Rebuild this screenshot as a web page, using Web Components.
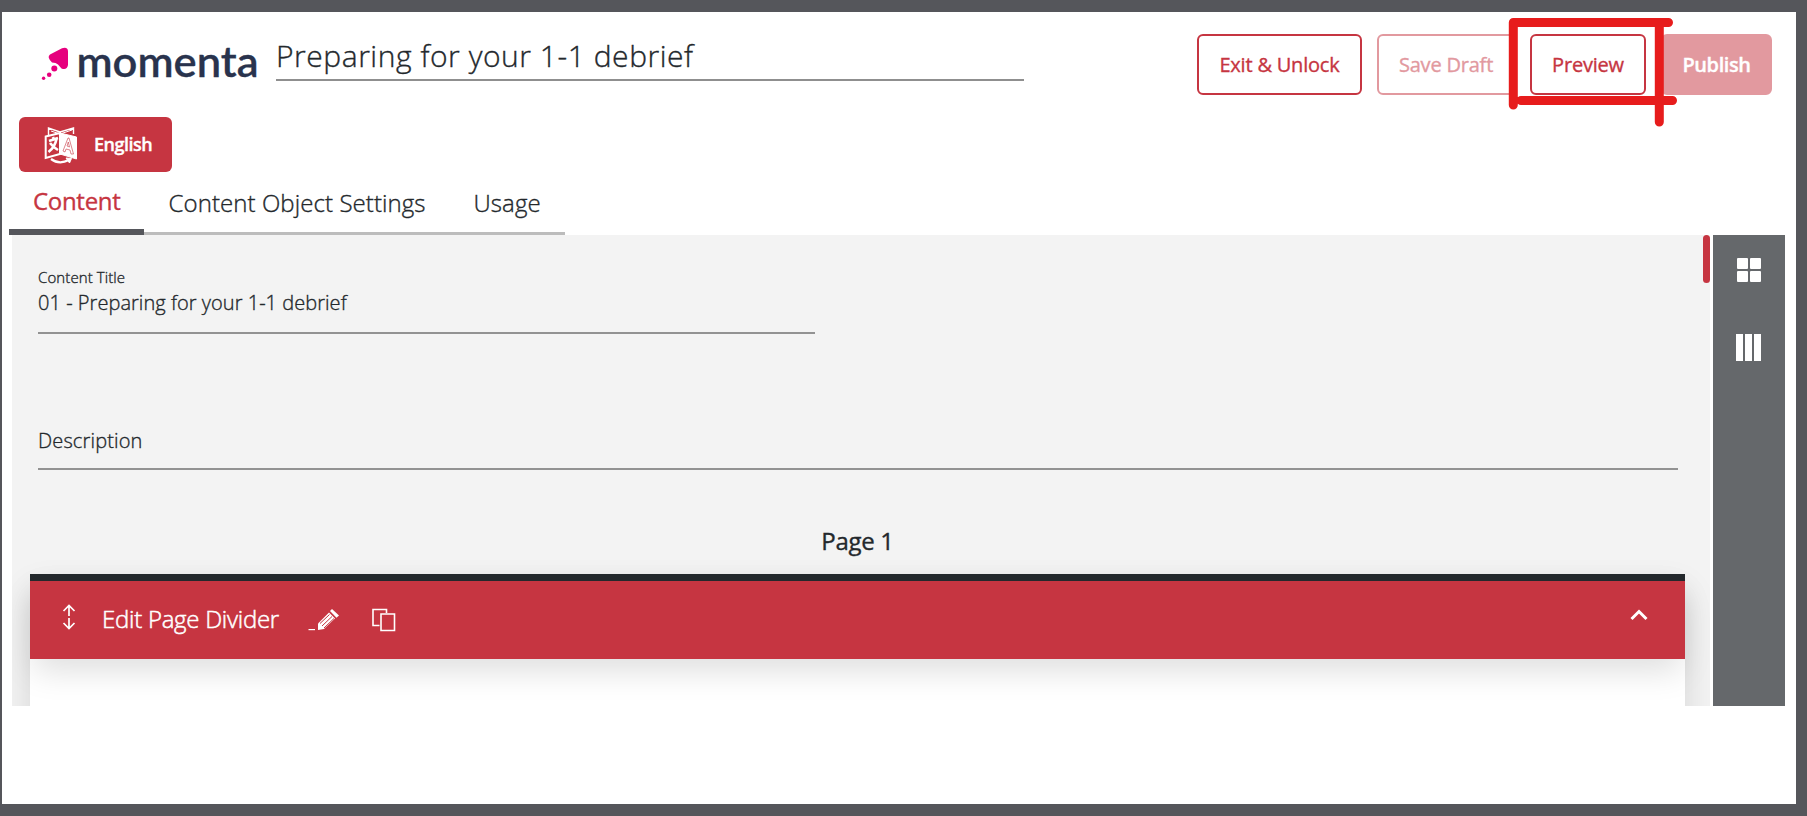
<!DOCTYPE html>
<html lang="en">
<head>
<meta charset="utf-8">
<title>Momenta</title>
<style>
  body {
    margin: 0;
    background: #55565b;
    font-family: "Open Sans", "Noto Sans", sans-serif;
    font-weight: 300;
    -webkit-text-stroke-width: .35px;
    color: #23282c;
  }
</style>
</head>
<body>
<app-window>
  <app-header slot="header" value="Preparing for your 1-1 debrief">
    <app-button style="width:165px">Exit &amp; Unlock</app-button>
    <app-button style="width:138px" disabled>Save Draft</app-button>
    <app-button style="width:116px">Preview</app-button>
    <app-button style="width:111px" filled disabled>Publish</app-button>
  </app-header>
  <language-button slot="language">English</language-button>
  <tab-bar slot="tabs">
    <tab-item style="width:135px" active>Content</tab-item>
    <tab-item style="width:305px">Content Object Settings</tab-item>
    <tab-item style="width:116px">Usage</tab-item>
  </tab-bar>
  <content-panel>
    <text-field style="width:777px" label="Content Title">01 - Preparing for your 1-1 debrief</text-field>
    <text-field class="description" compact>Description</text-field>
    <page-section heading="Page 1">Edit Page Divider</page-section>
  </content-panel>
  <side-tools></side-tools>
</app-window>
<red-marker></red-marker>

<script>
class BaseElement extends HTMLElement {
  constructor() {
    super();
    this.attachShadow({ mode: 'open' });
  }

  connectedCallback() {
    this.shadowRoot.innerHTML = this.render();
  }
}

class AppWindow extends BaseElement {
  render() {
    return `
      <style>
        :host {
          display: flex;
          flex-direction: column;
          width: 1794px;
          height: 792px;
          margin: 12px 11px 12px 2px;
          background: #fff;
        }
        .language { padding-left: 17px; height: 55px; }
        .tabs { padding-left: 7px; height: 63px; }
        .body { display: flex; gap: 3px; height: 471px; padding-left: 10px; }
      </style>
      <slot name="header"></slot>
      <div class="language"><slot name="language"></slot></div>
      <div class="tabs"><slot name="tabs"></slot></div>
      <div class="body"><slot></slot></div>
    `;
  }
}

class AppHeader extends BaseElement {
  render() {
    return `
      <style>
        :host {
          display: flex;
          align-items: flex-start;
          height: 105px;
          box-sizing: border-box;
          padding: 22px 24px 0 34px;
        }
        .logo { flex: none; width: 240px; height: 60px; }
        .title {
          width: 748px;
          height: 45px;
          line-height: 43px;
          font-size: 30px;
          letter-spacing: .54px;
          border-bottom: 2px solid #8f8f8f;
          white-space: nowrap;
        }
        .actions { display: flex; gap: 15px; margin-left: auto; }
      </style>
      <svg class="logo" viewBox="36 34 240 60">
        <path d="M50 54.500 62 48.200Q68 46.500 68 51.500V65Q67 70.500 61.500 68.500L58 64.500Q56 62.500 52 62.500Q46.500 57 50 54.500Z" fill="#e6007e"/>
        <circle cx="54.300" cy="68.500" r="3" fill="#e6007e"/>
        <circle cx="49.200" cy="74.700" r="2.300" fill="#e6007e"/>
        <circle cx="43.600" cy="78.300" r="1.700" fill="#e6007e"/>
        <text x="76.500" y="77.300" font-family="Lato" font-weight="600" font-size="43" textLength="182" lengthAdjust="spacingAndGlyphs" fill="#29334d" stroke="#29334d" stroke-width=".3">momenta</text>
      </svg>
      <div class="title">${this.getAttribute('value')}</div>
      <div class="actions"><slot></slot></div>
    `;
  }
}

class AppButton extends BaseElement {
  render() {
    return `
      <style>
        :host {
          display: flex;
          align-items: center;
          justify-content: center;
          box-sizing: border-box;
          height: 61px;
          border: 2px solid #c63541;
          border-radius: 6px;
          color: #c63541;
          background: #fff;
          font-size: 20px;
          font-weight: 500;
          letter-spacing: -.2px;
          white-space: nowrap;
        }
        :host([disabled]) { border-color: #e2999f; color: #e2999f; }
        :host([filled]) { background: #e2999f; color: #fff; font-weight: 600; letter-spacing: -.4px; }
      </style>
      <slot></slot>
    `;
  }
}

class LanguageButton extends BaseElement {
  render() {
    return `
      <style>
        :host {
          display: flex;
          align-items: center;
          box-sizing: border-box;
          width: 153px;
          height: 55px;
          padding-left: 25px;
          gap: 16px;
          border-radius: 6px;
          background: #c63541;
          color: #fff;
          font-size: 18px;
          font-weight: 600;
          letter-spacing: -.5px;
        }
        svg { width: 34px; height: 38px; margin-top: 3px; }
        span { margin-top: -1px; }
      </style>
      <svg viewBox="0 0 34 38" fill="none" stroke="#fff">
        <path d="M4.500 8V1L16 5 29.500 1V7" stroke-width="1.400"/>
        <path d="M7 4 16 7 28 3" stroke-width="1"/>
        <path d="M1.700 9.500 16 6V27L1.700 31Z" stroke-width="2"/>
        <path d="M16 6 32.500 10V32L16 27Z" fill="#fff"/>
        <path d="M5 14 14 11M9 10 10 13M12.500 12Q11 20 4.500 25M6 16Q9 20 14 23" stroke-width="2.600"/>
        <path d="M19 24 24 11H25L29.500 27H27L26 23 22 22 21 25ZM23 19 25.500 20 24.300 15Z" stroke="#c63541" stroke-width=".6"/>
        <path d="M7 32Q15 38 25 33" stroke-width="2.200"/>
        <path d="M22 31 27.500 31.500 25.500 36Z" fill="#fff"/>
      </svg>
      <span><slot></slot></span>
    `;
  }
}

class TabBar extends BaseElement {
  render() {
    return `
      <style>
        :host { display: flex; height: 63px; }
      </style>
      <slot></slot>
    `;
  }
}

class TabItem extends BaseElement {
  render() {
    return `
      <style>
        :host {
          display: block;
          box-sizing: border-box;
          height: 63px;
          padding: 13px 0 0 24.5px;
          border-bottom: 3px solid #bcbcbc;
          font-size: 24px;
          line-height: 36px;
          letter-spacing: .08px;
          white-space: nowrap;
        }
        :host([active]) {
          padding-top: 11px;
          padding-left: 24px;
          border-bottom: 6px solid #55565b;
          color: #c63541;
          font-weight: 500;
          letter-spacing: -.3px;
        }
      </style>
      <slot></slot>
    `;
  }
}

class ContentPanel extends BaseElement {
  render() {
    return `
      <style>
        :host {
          display: flex;
          flex-direction: column;
          position: relative;
          box-sizing: border-box;
          width: 1698px;
          height: 471px;
          padding: 32px 0 0 26px;
          overflow: hidden;
          background: #f3f3f3;
        }
        ::slotted(.description) { width: 1640px; margin-top: 92px; }
        .thumb {
          position: absolute;
          top: 0;
          right: 0;
          width: 7px;
          height: 48px;
          border-radius: 4px;
          background: #c63541;
        }
      </style>
      <slot></slot>
      <div class="thumb"></div>
    `;
  }
}

class TextField extends BaseElement {
  render() {
    const label = this.getAttribute('label');
    return `
      <style>
        :host {
          display: block;
          border-bottom: 2px solid #929292;
          padding-bottom: 14px;
          white-space: nowrap;
        }
        :host([compact]) { padding-bottom: 12px; }
        .label { font-size: 15px; line-height: 20px; margin-bottom: 1px; letter-spacing: .1px; }
        .value { font-size: 20px; line-height: 30px; letter-spacing: .04px; }
        :host([compact]) .value { letter-spacing: .15px; }
      </style>
      ${label ? `<div class="label">${label}</div>` : ''}
      <div class="value"><slot></slot></div>
    `;
  }
}

class PageSection extends BaseElement {
  render() {
    return `
      <style>
        :host { display: block; width: 1655px; margin: 53px 0 0 -8px; }
        .heading {
          height: 51px;
          line-height: 36px;
          font-size: 24px;
          font-weight: 500;
          letter-spacing: -.3px;
          text-align: center;
        }
        .card {
          height: 260px;
          background: #fff;
          box-shadow: 0 16px 32px rgba(0, 0, 0, .12);
        }
        .bar {
          display: flex;
          align-items: center;
          box-sizing: border-box;
          height: 85px;
          padding: 0 37px 0 32px;
          border-top: 7px solid #23282c;
          background: #c63541;
          color: #fff;
          font-size: 24px;
          letter-spacing: -.27px;
          box-shadow: 0 16px 32px -4px rgba(0, 0, 0, .13);
        }
        svg { flex: none; fill: none; stroke: #fff; }
        .move { width: 14px; height: 26px; margin: -6px 26px 0 0; }
        .name { width: 206px; white-space: nowrap; line-height: 34px; margin-top: -2px; -webkit-text-stroke-width: .5px; }
        .edit { width: 32px; height: 24px; }
        .copy { width: 24px; height: 24px; margin-left: 32px; }
        .chevron { width: 18px; height: 12px; margin: -10px 0 0 auto; }
      </style>
      <div class="heading">${this.getAttribute('heading')}</div>
      <div class="card">
        <div class="bar">
          <svg class="move" viewBox="0 0 14 26" stroke-width="1.700">
            <path d="M7 1.500V12M1.500 7 7 1.500 12.500 7M7 14V24.500M1.500 19 7 24.500 12.500 19"/>
          </svg>
          <span class="name"><slot></slot></span>
          <svg class="edit" viewBox="0 0 32 24">
            <path d="M.5 21.600H7" stroke-width="1.200"/>
            <path d="M10 22V15.500L21 4.500 27 10.500 16 21Z" fill="#fff" stroke="none"/>
            <path d="M22 3 24 1 31 7.500 28.500 9.800Z" fill="#fff" stroke="none"/>
            <path d="M12 15.500 21.500 6.500M14 18 24 8.500M16 20 26 10.500" stroke="#c63541" stroke-width="1"/>
          </svg>
          <svg class="copy" viewBox="0 0 24 24" stroke-width="1.600">
            <path d="M7.500 17.500H1V1.500H14.500V5"/>
            <path d="M9 6H22.500V22.500H9Z"/>
          </svg>
          <svg class="chevron" viewBox="0 0 18 12" stroke-width="3">
            <path d="M1.500 10 9 2.500 16.500 10"/>
          </svg>
        </div>
      </div>
    `;
  }
}

class SideTools extends BaseElement {
  render() {
    return `
      <style>
        :host {
          display: flex;
          flex-direction: column;
          align-items: center;
          box-sizing: border-box;
          width: 72px;
          height: 471px;
          padding-top: 23px;
          background: #65686b;
        }
        svg { fill: #fff; }
        .columns { margin-top: 52px; margin-right: 1px; }
      </style>
      <svg width="24" height="24" viewBox="0 0 24 24">
        <rect x="0" y="0" width="11" height="11" rx="1"/>
        <rect x="13" y="0" width="11" height="11" rx="1"/>
        <rect x="0" y="13" width="11" height="11" rx="1"/>
        <rect x="13" y="13" width="11" height="11" rx="1"/>
      </svg>
      <svg class="columns" width="25" height="27" viewBox="0 0 25 27">
        <rect x="0" width="7" height="27"/>
        <rect x="9" width="7" height="27"/>
        <rect x="18" width="7" height="27"/>
      </svg>
    `;
  }
}

// hand-drawn box that lies over the Preview button
class RedMarker extends BaseElement {
  render() {
    return `
      <style>
        :host { display: block; position: absolute; left: 1500px; top: 10px; }
        svg { display: block; fill: none; stroke: #e71c1c; stroke-width: 9; stroke-linecap: round; }
      </style>
      <svg width="190" height="124" viewBox="1500 10 190 124">
        <path d="M1513.300 22.500V105M1513.300 22.500H1668.500M1659.300 24V122M1521 100.500H1672.500"/>
      </svg>
    `;
  }
}

customElements.define('app-window', AppWindow);
customElements.define('app-header', AppHeader);
customElements.define('app-button', AppButton);
customElements.define('language-button', LanguageButton);
customElements.define('tab-bar', TabBar);
customElements.define('tab-item', TabItem);
customElements.define('content-panel', ContentPanel);
customElements.define('text-field', TextField);
customElements.define('page-section', PageSection);
customElements.define('side-tools', SideTools);
customElements.define('red-marker', RedMarker);
</script>
</body>
</html>
